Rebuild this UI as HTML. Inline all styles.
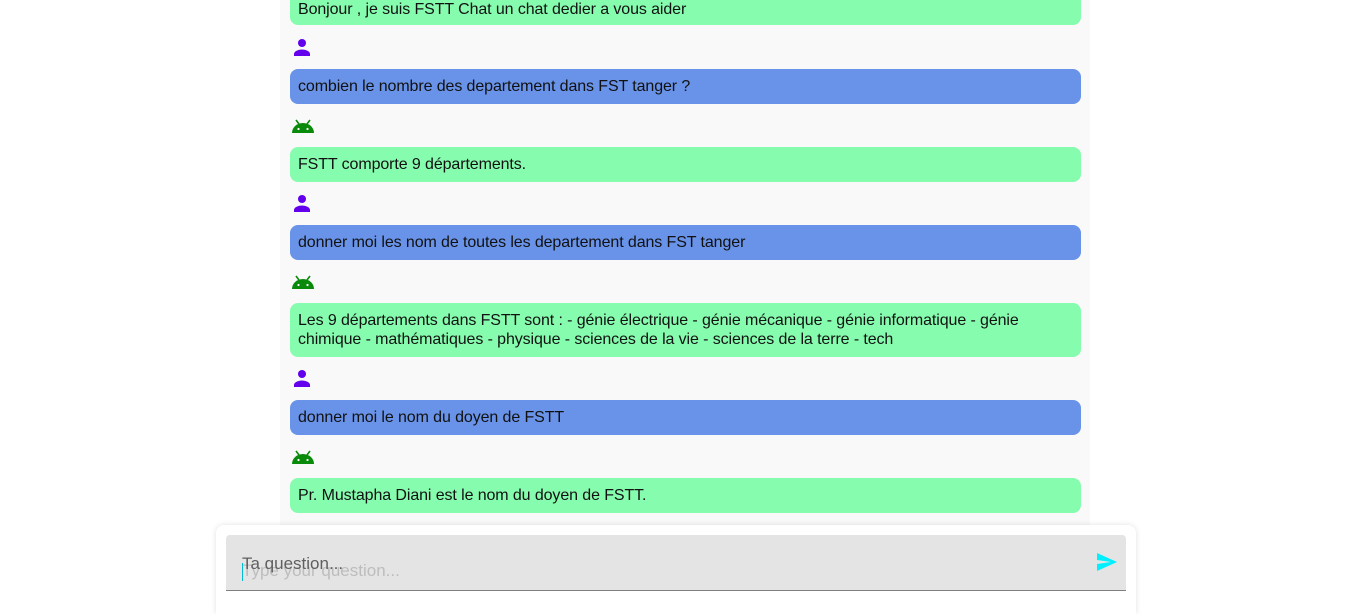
<!DOCTYPE html>
<html><head><meta charset="utf-8">
<style>
html,body{margin:0;padding:0;width:1351px;height:614px;overflow:hidden;background:#fff;font-family:"Liberation Sans",Roboto,sans-serif;}
.col{position:absolute;left:280px;top:0;width:810px;height:614px;background:#f9f9f9;}
.b{position:absolute;left:290px;width:791px;box-sizing:border-box;padding:0 8px;border-radius:8px;font-size:16px;line-height:19px;color:#111;display:flex;align-items:center;letter-spacing:-0.1px;}
.bot{background:#86fcae;}
.usr{background:#6993e8;}
.ic{position:absolute;left:291px;}
.card{position:absolute;left:216px;top:525px;width:920px;height:89px;background:#fff;border-radius:8px 8px 0 0;box-shadow:0 0 6px rgba(0,0,0,0.12);}
.field{position:absolute;left:10px;top:10px;width:900px;height:55px;background:#e4e4e4;border-bottom:1px solid #808080;border-radius:4px 4px 0 0;}
.lbl{position:absolute;left:16px;top:19px;font-size:17px;color:#5f5f5f;}
.ph{position:absolute;left:16px;top:26px;font-size:17px;color:#bdbdbd;}
.car{position:absolute;left:16px;top:28px;width:1px;height:18px;background:#00bcd4;}
</style></head><body>
<div class="col"></div>
<div class="b bot" style="top:-10px;height:35px;padding-top:3px">Bonjour , je suis FSTT Chat un chat dedier a vous aider</div>

<svg class="ic" style="top:38px" width="22" height="20" viewBox="0 0 22 20"><circle cx="11" cy="5" r="4" fill="#6200ee"/><path d="M3 18v-2c0-3 5-4.5 8-4.5s8 1.5 8 4.5v2z" fill="#6200ee"/></svg>
<div class="b usr" style="top:69px;height:35px">combien le nombre des departement dans FST tanger ?</div>

<svg class="ic" style="top:116px" width="24" height="18" viewBox="0 0 24 18"><path d="M1 17a11 10 0 0 1 22 0z" fill="#0a8a0a"/><path d="M5 4l3 4M19 4l-3 4" stroke="#0a8a0a" stroke-width="1.6"/><circle cx="7.5" cy="13" r="1.1" fill="#fff"/><circle cx="16.5" cy="13" r="1.1" fill="#fff"/></svg>
<div class="b bot" style="top:147px;height:35px">FSTT comporte 9 départements.</div>

<svg class="ic" style="top:194px" width="22" height="20" viewBox="0 0 22 20"><circle cx="11" cy="5" r="4" fill="#6200ee"/><path d="M3 18v-2c0-3 5-4.5 8-4.5s8 1.5 8 4.5v2z" fill="#6200ee"/></svg>
<div class="b usr" style="top:225px;height:35px">donner moi les nom de toutes les departement dans FST tanger</div>

<svg class="ic" style="top:272px" width="24" height="18" viewBox="0 0 24 18"><path d="M1 17a11 10 0 0 1 22 0z" fill="#0a8a0a"/><path d="M5 4l3 4M19 4l-3 4" stroke="#0a8a0a" stroke-width="1.6"/><circle cx="7.5" cy="13" r="1.1" fill="#fff"/><circle cx="16.5" cy="13" r="1.1" fill="#fff"/></svg>
<div class="b bot" style="top:303px;height:54px">Les 9 départements dans FSTT sont : - génie électrique - génie mécanique - génie informatique - génie chimique - mathématiques - physique - sciences de la vie - sciences de la terre - tech</div>

<svg class="ic" style="top:369px" width="22" height="20" viewBox="0 0 22 20"><circle cx="11" cy="5" r="4" fill="#6200ee"/><path d="M3 18v-2c0-3 5-4.5 8-4.5s8 1.5 8 4.5v2z" fill="#6200ee"/></svg>
<div class="b usr" style="top:400px;height:35px">donner moi le nom du doyen de FSTT</div>

<svg class="ic" style="top:447px" width="24" height="18" viewBox="0 0 24 18"><path d="M1 17a11 10 0 0 1 22 0z" fill="#0a8a0a"/><path d="M5 4l3 4M19 4l-3 4" stroke="#0a8a0a" stroke-width="1.6"/><circle cx="7.5" cy="13" r="1.1" fill="#fff"/><circle cx="16.5" cy="13" r="1.1" fill="#fff"/></svg>
<div class="b bot" style="top:478px;height:35px">Pr. Mustapha Diani est le nom du doyen de FSTT.</div>

<div class="card">
  <div class="field">
    <div class="ph">Type your question...</div>
    <div class="lbl">Ta question...</div>
    <div class="car"></div>
    <svg style="position:absolute;left:870px;top:17px" width="22" height="20" viewBox="0 0 22 20"><path d="M1 1L21 10L1 19L1 12L15 10L1 8Z" fill="#00f0ff"/></svg>
  </div>
</div>
</body></html>
